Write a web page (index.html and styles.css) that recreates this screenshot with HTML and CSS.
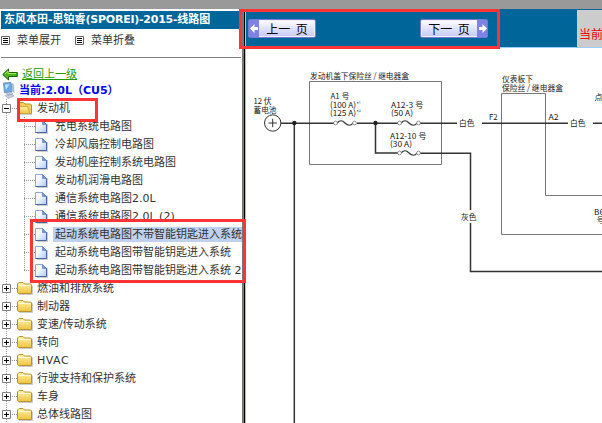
FILE: index.html
```html
<!DOCTYPE html>
<html lang="zh-CN">
<head>
<meta charset="utf-8">
<title>东风本田-思铂睿(SPOREI)-2015-线路图</title>
<link rel="stylesheet" href="styles.css">
</head>
<body>
<svg class="defs" aria-hidden="true">
  <defs>
    <linearGradient id="gold" x1="0" y1="0" x2="0" y2="1"><stop offset="0" stop-color="#fff4b0"/><stop offset="1" stop-color="#edc43c"/></linearGradient>
    <linearGradient id="paper" x1="0" y1="0" x2="1" y2="1"><stop offset="0" stop-color="#fff"/><stop offset=".4" stop-color="#f2f7ff"/><stop offset="1" stop-color="#a9c9f5"/></linearGradient>
    <symbol id="folder" viewBox="0 0 16 16">
      <path d="M2 14.500h13.500v-9" fill="none" stroke="#aaa" stroke-opacity=".6"/>
      <path d="M.5 12.500V4L2 2.500h4L7.500 4h6l1 1v8.500h-13z" fill="url(#gold)" stroke="#b8932f"/>
      <path d="M1.500 5.500h12" stroke="#fffbd8"/>
    </symbol>
    <symbol id="folder-open" viewBox="0 0 16 16">
      <path d="M2 14.500h13" stroke="#aaa" stroke-opacity=".6"/>
      <path d="M1.500 12V4l1-1.500h4L8 4h5.500l1 1v8.500H3z" fill="#f2cf55" stroke="#b8932f"/>
      <path d="M.5 6.500h10l2.500 7H2.800z" fill="url(#gold)" stroke="#d0a840"/>
    </symbol>
    <symbol id="page" viewBox="0 0 13 15">
      <path d="M2 14.500h10.500V5" fill="none" stroke="#999" stroke-opacity=".5"/>
      <path d="M.5 1.500h7l4 4v8H.5z" fill="url(#paper)" stroke="#8ea6d6"/>
      <path d="M7.500 1.500v4h4z" fill="#6f9ad8" stroke="#5d84c4" stroke-width=".7"/>
      <path d="M.5 13.500h11v-8" fill="none" stroke="#4a689f"/>
    </symbol>
    <symbol id="plus" viewBox="0 0 9 9"><path d="M.5.5h8v8h-8z" fill="#fff" stroke="#808080"/><path d="M2 4.500h5M4.500 2v5" stroke="#000"/></symbol>
    <symbol id="minus" viewBox="0 0 9 9"><path d="M.5.5h8v8h-8z" fill="#fff" stroke="#808080"/><path d="M2 4.500h5" stroke="#000"/></symbol>
    <symbol id="list" viewBox="0 0 9 9"><path d="M.5.5h8v8h-8z" fill="#fff" stroke="#666"/><path d="M2 2.500h5M2 4.500h5M2 6.500h5" stroke="#000"/></symbol>
    <symbol id="fuse" viewBox="0 0 24 8">
      <path d="M4 4C7 1 9 1 12 4s6 3 8 0" fill="none" stroke="#333" stroke-width="1.200"/>
      <circle cx="2.500" cy="4" r="1.900" fill="#fff" stroke="#777" stroke-width=".8"/><circle cx="21.500" cy="4" r="1.900" fill="#fff" stroke="#777" stroke-width=".8"/>
    </symbol>
  </defs>
</svg>
<div class="app">
  <div class="topbar"></div>
  <div class="frames">
    <aside class="sidebar">
      <h1 class="title"><span>东风本田-思铂睿</span><span class="brand">(SPOREI)-2015-</span><span>线路图</span></h1>
      <div class="tools">
        <svg><use href="#list"/></svg><span>菜单展开</span>
        <svg><use href="#list"/></svg><span>菜单折叠</span>
      </div>
      <div class="back">
        <svg width="16" height="13" viewBox="0 0 16 13"><path d="M.7 6.500 6.500 1v3.500h8.800v4H6.500V12z" fill="#49b51c" stroke="#1d6508"/><path d="M3 6l3-3v2.500h8" fill="none" stroke="#b3e957"/></svg>
        <a>返回上一级</a>
      </div>
      <div class="current">
        <svg width="14" height="17" viewBox="0 0 14 17"><path d="M1.500 1 9 .6l1 9-7.500 1.200z" fill="#65aaf0" stroke="#7992b5"/><path d="M3 2.500l4.500-.3L4 8z" fill="#c0e2ff"/><path d="m10 1 2 1 .5 9-2.200-1.500z" fill="#a8bed6"/><path d="m4 11 5-1 2 2-5 1.500zM3 13.500l6-1.500 3 2-6 2.500z" fill="#c9d3e2" stroke="#8b9cb5" stroke-width=".6"/></svg>
        <b>当前:2.0L（CU5）</b>
      </div>
      <ul class="tree">
        <li class="node"><svg class="toggle"><use href="#minus"/></svg><svg class="folder"><use href="#folder-open"/></svg><span>发动机</span></li>
        <li class="leaf"><svg><use href="#page"/></svg><span>充电系统电路图</span></li>
        <li class="leaf"><svg><use href="#page"/></svg><span>冷却风扇控制电路图</span></li>
        <li class="leaf"><svg><use href="#page"/></svg><span>发动机座控制系统电路图</span></li>
        <li class="leaf"><svg><use href="#page"/></svg><span>发动机润滑电路图</span></li>
        <li class="leaf"><svg><use href="#page"/></svg><span>通信系统电路图2.0L</span></li>
        <li class="leaf"><svg><use href="#page"/></svg><span>通信系统电路图2.0L (2)</span></li>
        <li class="leaf selected"><svg><use href="#page"/></svg><span>起动系统电路图不带智能钥匙进入系统</span></li>
        <li class="leaf"><svg><use href="#page"/></svg><span>起动系统电路图带智能钥匙进入系统</span></li>
        <li class="leaf last"><svg><use href="#page"/></svg><span>起动系统电路图带智能钥匙进入系统 2</span></li>
        <li class="node"><svg class="toggle"><use href="#plus"/></svg><svg class="folder"><use href="#folder"/></svg><span>燃油和排放系统</span></li>
        <li class="node"><svg class="toggle"><use href="#plus"/></svg><svg class="folder"><use href="#folder"/></svg><span>制动器</span></li>
        <li class="node"><svg class="toggle"><use href="#plus"/></svg><svg class="folder"><use href="#folder"/></svg><span>变速/传动系统</span></li>
        <li class="node"><svg class="toggle"><use href="#plus"/></svg><svg class="folder"><use href="#folder"/></svg><span>转向</span></li>
        <li class="node"><svg class="toggle"><use href="#plus"/></svg><svg class="folder"><use href="#folder"/></svg><span class="latin">HVAC</span></li>
        <li class="node"><svg class="toggle"><use href="#plus"/></svg><svg class="folder"><use href="#folder"/></svg><span>行驶支持和保护系统</span></li>
        <li class="node"><svg class="toggle"><use href="#plus"/></svg><svg class="folder"><use href="#folder"/></svg><span>车身</span></li>
        <li class="node"><svg class="toggle"><use href="#plus"/></svg><svg class="folder"><use href="#folder"/></svg><span>总体线路图</span></li>
      </ul>
    </aside>
    <div class="divider"></div>
    <main class="viewer">
      <header class="pager">
        <button class="page-button"><i><svg width="9" height="9" viewBox="0 0 9 9"><path d="M0 4.500 4.500 0v3H8v3H4.500v3z" fill="#fff"/></svg></i><span>上一 页</span></button>
        <button class="page-button next"><span>下一 页</span><i><svg width="9" height="9" viewBox="0 0 9 9"><path d="M9 4.500 4.500 0v3H1v3h3.500v3z" fill="#fff"/></svg></i></button>
        <div class="status">当前</div>
      </header>
      <svg class="diagram" width="356" height="375" viewBox="246 48 356 375">
        <g fill="none" stroke="#777" stroke-width="1">
          <path d="M309.500 81.500h132v83h-132z"/>
          <path d="M602 234.500H501.500V93.500h44v102H602"/>
        </g>
        <g fill="none" stroke="#333" stroke-width="1.500">
          <path d="M281 123.200h53M357 123.200h41M420 123.200h37M482 123.200h86M593 123.200h9M294.300 123v300M375.500 123v30H398M420 153.300h50.500V210M470.500 223v48.500H602"/>
        </g>
        <circle cx="294.300" cy="123" r="2.200" fill="#222"/><circle cx="375.500" cy="123" r="2.200" fill="#222"/>
        <circle cx="272.700" cy="123" r="8.200" fill="#fff" stroke="#333"/>
        <path d="M268.500 123h8.400M272.700 118.800v8.400" stroke="#333"/>
        <use href="#fuse" x="333" y="119" width="24" height="8"/><use href="#fuse" x="397" y="119" width="24" height="8"/><use href="#fuse" x="397" y="149" width="24" height="8"/>
        <g class="labels">
          <text x="310" y="78.500" textLength="99" lengthAdjust="spacingAndGlyphs">发动机盖下保险丝 / 继电器盒</text>
          <text x="253.500" y="104" textLength="18" lengthAdjust="spacingAndGlyphs">12 伏</text><text x="253.500" y="113" textLength="23" lengthAdjust="spacingAndGlyphs">蓄电池</text>
          <text x="330.500" y="99" textLength="19" lengthAdjust="spacingAndGlyphs">A1 号</text>
          <text x="330" y="107.500" textLength="26" lengthAdjust="spacingAndGlyphs">(100 A)</text><text class="note" x="356.500" y="105.500">*¹</text>
          <text x="330" y="116" textLength="26" lengthAdjust="spacingAndGlyphs">(125 A)</text><text class="note" x="356.500" y="114">*²</text>
          <text x="391" y="107.500" textLength="32.500" lengthAdjust="spacingAndGlyphs">A12-3 号</text><text x="391" y="116" textLength="22" lengthAdjust="spacingAndGlyphs">(50 A)</text>
          <text x="390" y="138.500" textLength="36.500" lengthAdjust="spacingAndGlyphs">A12-10 号</text><text x="390" y="147" textLength="22" lengthAdjust="spacingAndGlyphs">(30 A)</text>
          <text x="459" y="126" textLength="15.500" lengthAdjust="spacingAndGlyphs">白色</text><text x="489" y="119.500" textLength="8.500" lengthAdjust="spacingAndGlyphs">F2</text>
          <text x="548.500" y="119.500" textLength="10" lengthAdjust="spacingAndGlyphs">A2</text><text x="570" y="126" textLength="15.500" lengthAdjust="spacingAndGlyphs">白色</text>
          <text x="502" y="82" textLength="31" lengthAdjust="spacingAndGlyphs">仪表板下</text><text x="502" y="90.500" textLength="61" lengthAdjust="spacingAndGlyphs">保险丝 / 继电器盒</text>
          <text x="594.500" y="99.500">点</text><text x="461" y="220" textLength="15.500" lengthAdjust="spacingAndGlyphs">灰色</text>
          <text x="594" y="214.500">B6</text><text x="596.500" y="223">号</text>
        </g>
      </svg>
    </main>
  </div>
  <div class="mark mark-pager"></div>
  <div class="mark mark-folder"></div>
  <div class="mark mark-items"></div>
</div>
</body>
</html>
```
FILE: styles.css
```css
* { box-sizing: border-box; }
body { margin: 0; background: #fff; overflow: hidden; }
.defs { position: absolute; width: 0; height: 0; }
.app { position: relative; width: 602px; height: 423px; overflow: hidden; display: flex; flex-direction: column; font: 11px/18px "DejaVu Sans", "Noto Sans CJK SC", sans-serif; color: #333; }
.topbar { height: 9px; flex: none; background: #999; }
.frames { display: flex; flex: 1; min-height: 0; }
.sidebar { width: 242px; padding: 2px 1px 0; overflow: hidden; white-space: nowrap; }
.title { margin: 0; height: 18px; padding-left: 3px; background: #069; color: #fff; font-size: 11px; font-weight: bold; line-height: 18px; }
.title .brand { letter-spacing: -.25px; }
.tools { display: flex; align-items: center; height: 29px; padding-bottom: 6px; border-bottom: 1px solid #808080; }
.tools svg { width: 9px; height: 9px; flex: none; }
.tools span { margin: 2px 14px 0 7px; }
.back { display: flex; align-items: center; gap: 4px; height: 16px; margin-top: 8px; padding-left: 1px; }
.back a { margin-top: 2px; color: #290; text-decoration: underline; }
.current { display: flex; align-items: center; gap: 3px; height: 17px; padding-left: 1px; color: #00f; }
.tree { margin: 0; padding: 0; list-style: none; background: repeating-linear-gradient(#999 0 1px, transparent 1px 2px) 5px 0 / 1px 100% no-repeat; }
.tree li { display: flex; align-items: center; height: 18px; }
.node { padding-left: 1px; }
.node .toggle { width: 9px; height: 9px; margin-right: 6px; }
.node .folder { width: 16px; height: 16px; margin-right: 4px; }
.node span { padding-top: 1px; }
.node .latin { letter-spacing: .5px; }
.tree svg { flex: none; }
.node { background: repeating-linear-gradient(90deg, #999 0 1px, transparent 1px 2px) 11px 9px / 5px 1px no-repeat; }
.leaf { padding-left: 34px; background: repeating-linear-gradient(#999 0 1px, transparent 1px 2px) 23px 0 / 1px 100% no-repeat, repeating-linear-gradient(90deg, #999 0 1px, transparent 1px 2px) 23px 9px / 11px 1px no-repeat; }
.leaf.last { background-size: 1px 10px, 11px 1px; }
.leaf svg { width: 13px; height: 15px; margin-right: 5px; }
.leaf span { height: 15px; line-height: 16px; padding: 0 2px; }
.selected span { background: #bfd1ec; }
.divider { width: 4px; flex: none; border-right: 2px solid #000; background: #777; }
.viewer { width: 356px; display: flex; flex-direction: column; box-shadow: -1px 0 #9bc4ff; }
.pager { display: flex; height: 39px; flex: none; padding-top: 10px; background: #069; border-bottom: 1px solid #9cf; }
.page-button { display: flex; align-items: stretch; width: 68px; height: 19px; margin: 0 0 0 2px; padding: 0; border: 1px solid #7478d0; border-radius: 2px; background: linear-gradient(#fff, #e3e4ff 45%, #c5c9fa); color: #000; font: 12px/17px "Noto Sans CJK SC", sans-serif; box-shadow: inset 0 0 0 1px #f3f3ff; }
.page-button i { display: flex; align-items: center; justify-content: center; width: 10px; background: #7d82e5; }
.page-button span { flex: 1; white-space: nowrap; text-align: center; word-spacing: 3px; }
.page-button.next { margin-left: 104px; }
.status { width: 25px; height: 37px; margin: -9px 0 0 auto; padding: 15px 0 0 2px; overflow: hidden; white-space: nowrap; background: #ccc; color: #f00; font: 12px/18px "Noto Sans CJK SC", sans-serif; }
.diagram { display: block; }
.labels { font: 8.2px "Noto Sans CJK SC", sans-serif; fill: #222; }
.note { font-size: 5px; }
.mark { position: absolute; border: 3px solid #ff3535; }
.mark-pager { left: 239px; top: 9px; width: 261px; height: 40px; }
.mark-folder { left: 17px; top: 98px; width: 81px; height: 24px; }
.mark-items { left: 30px; top: 219px; width: 216px; height: 64px; }
```
